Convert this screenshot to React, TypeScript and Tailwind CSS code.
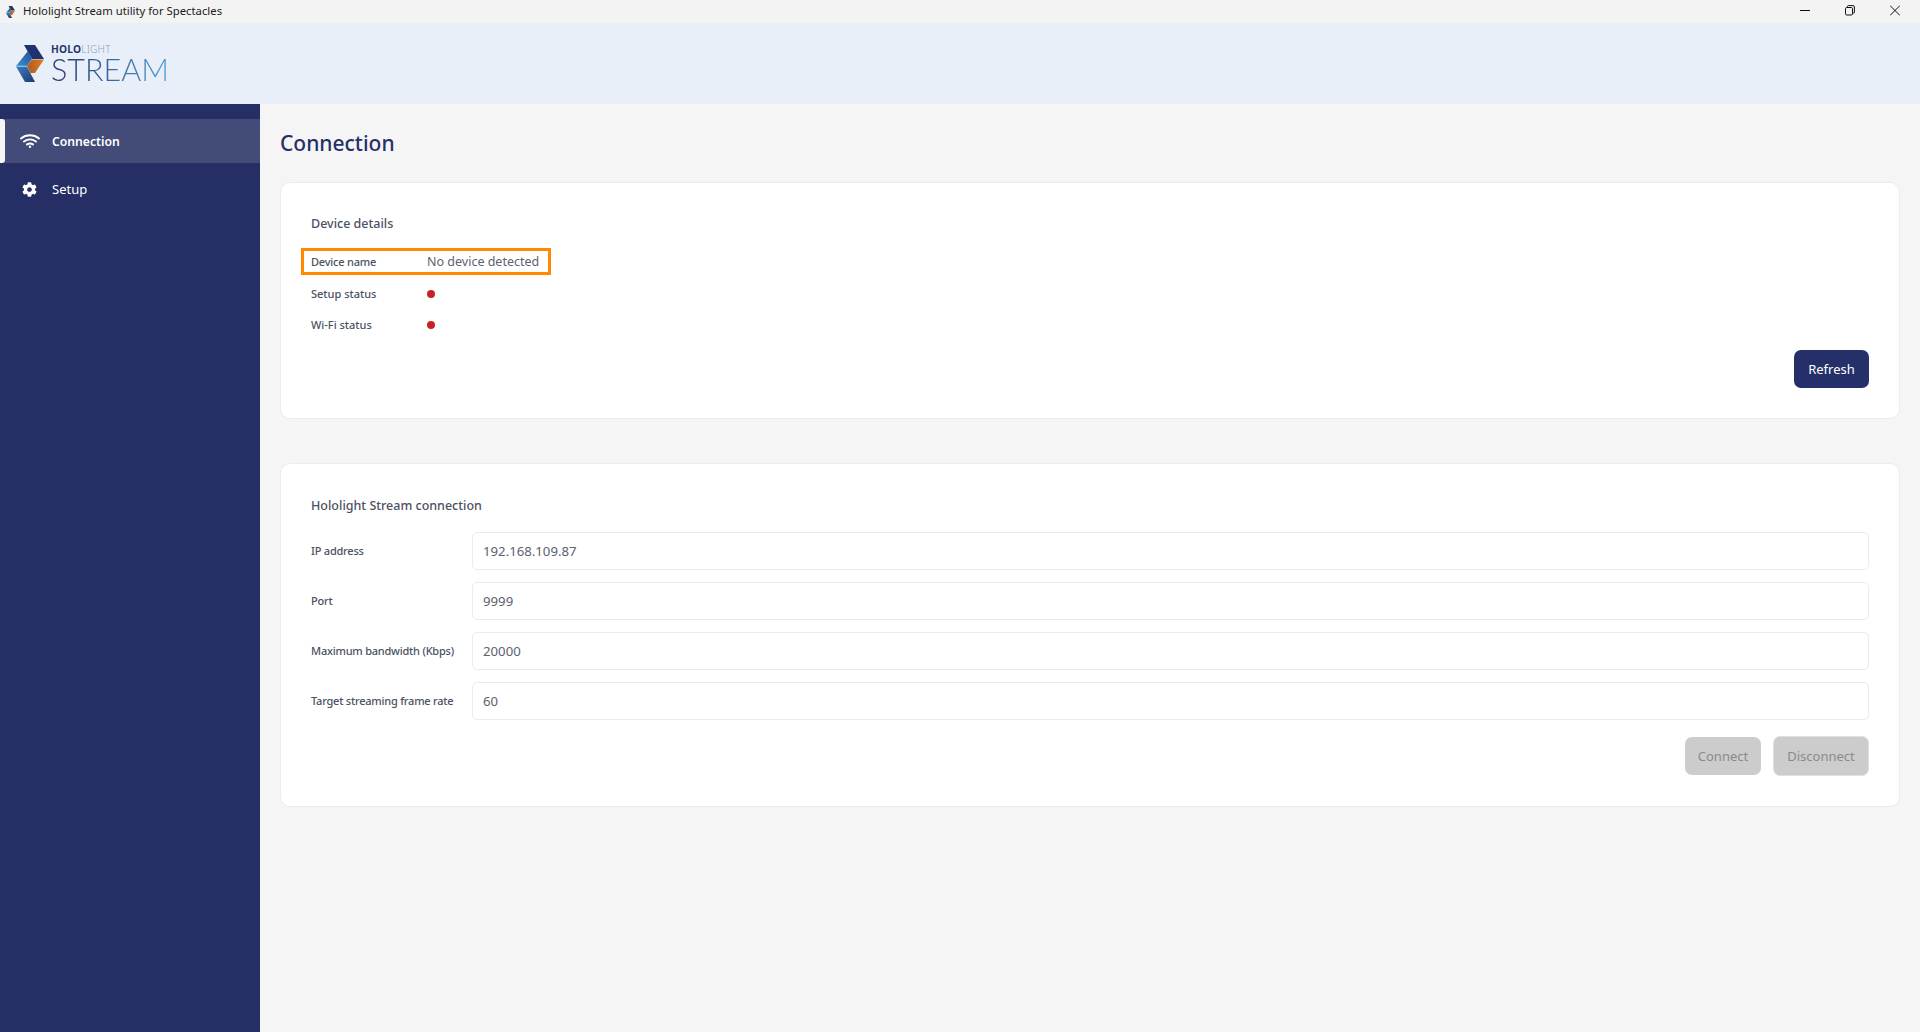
import React from "react";
import { FaCog } from "react-icons/fa";

const font = "font-['Noto_Sans','Liberation_Sans',sans-serif]";

function LogoMark({ size = 28, h = 37, id = "a" }: { size?: number; h?: number; id?: string }) {
  return (
    <svg width={size} height={h} viewBox="0 0 28 37" className="shrink-0">
      <defs>
        <linearGradient id={`${id}b`} x1="0" y1="1" x2="1" y2="0">
          <stop offset="0" stopColor="#3f8fd0" />
          <stop offset="1" stopColor="#1f4f93" />
        </linearGradient>
        <linearGradient id={`${id}o`} x1="0" y1="0" x2="1" y2="0">
          <stop offset="0" stopColor="#a9591f" />
          <stop offset="1" stopColor="#e57f22" />
        </linearGradient>
        <linearGradient id={`${id}d`} x1="0" y1="0" x2="1" y2="1">
          <stop offset="0" stopColor="#3d7fc0" />
          <stop offset="1" stopColor="#20386f" />
        </linearGradient>
      </defs>
      <polygon points="8,0 19,0 28,14 16,14" fill="#1f3170" />
      <polygon points="0,21 12,6 16,14 11,21" fill={`url(#${id}b)`} />
      <polygon points="28,14.5 19,28 14.5,28 11,21 16,14.5" fill={`url(#${id}o)`} />
      <polygon points="0,21.5 11,21.5 19,37 9,37" fill={`url(#${id}d)`} />
      <line x1="0.5" y1="21.2" x2="11" y2="21.2" stroke="#8cc4ee" strokeWidth="1" />
    </svg>
  );
}

function WifiIcon() {
  return (
    <svg width="20" height="14" viewBox="0 0 20 14" fill="none" stroke="#fff" strokeWidth="1.9" strokeLinecap="round" className="shrink-0">
      <path d="M1 4.5 C6 0.2 14 0.2 19 4.5" />
      <path d="M4 7.6 C8 4.6 12 4.6 16 7.6" />
      <path d="M7 10.4 C9 9.2 11 9.2 13 10.4" />
      <circle cx="10" cy="12.8" r="1.2" fill="#fff" stroke="none" />
    </svg>
  );
}

function Field({ label, value }: { label: string; value: string }) {
  return (
    <div className="flex items-center h-[38px]">
      <span className="w-[161px] shrink-0 pt-[1px] whitespace-nowrap text-[11px] tracking-[-0.22px] font-medium text-[#4b5263]">{label}</span>
      <input
        readOnly
        value={value}
        className={`flex-1 h-[38px] rounded-[5px] border border-[#e9ebee] bg-white px-[10px] text-[13.2px] text-[#5c6270] outline-none ${font}`}
      />
    </div>
  );
}

export default function App() {
  return (
    <div className={`flex flex-col h-screen overflow-hidden bg-[#f5f5f5] ${font}`}>
      {/* Title bar */}
      <div className="flex items-center h-[23px] bg-[#f3f3f3] pl-[6px] shrink-0">
        <LogoMark size={9} h={12} id="t" />
        <span className="ml-[8px] text-[11.3px] text-[#1a1a1a]">Hololight Stream utility for Spectacles</span>
        <div className="ml-auto flex items-center gap-[35px] pr-[20px] -mt-[3px]">
          <svg width="10" height="11" viewBox="0 0 10 11"><line x1="0" y1="5.5" x2="10" y2="5.5" stroke="#111" strokeWidth="1" /></svg>
          <svg width="10" height="11" viewBox="0 0 10 11" fill="none" stroke="#111" strokeWidth="1"><rect x="0.5" y="2.5" width="7" height="7.5" rx="1.2" /><path d="M2.5 2.5 V1.6 A1 1 0 0 1 3.5 0.6 H8 A1.4 1.4 0 0 1 9.4 2 V7.2 A1 1 0 0 1 8.4 8.2 H7.5" /></svg>
          <svg width="10" height="11" viewBox="0 0 10 11" stroke="#111" strokeWidth="1"><line x1="0" y1="0.5" x2="10" y2="10.5" /><line x1="10" y1="0.5" x2="0" y2="10.5" /></svg>
        </div>
      </div>

      {/* Header */}
      <div className="flex items-center h-[81px] bg-[#e9eff8] pl-[16px] shrink-0">
        <LogoMark />
        <div className="ml-[7px] flex flex-col">
          <span className="text-[10.2px] leading-[10px] tracking-[0.2px] text-[#24386f]">
            <span className="font-bold">HOLO</span>
            <span className="font-light text-[#8fa3c2]">LIGHT</span>
          </span>
          <span className="text-[30.5px] leading-[30px] font-light font-['Lato','Noto_Sans',sans-serif] bg-linear-to-r from-[#24386f] to-[#4a9bd4] bg-clip-text text-transparent w-fit">STREAM</span>
        </div>
      </div>

      {/* Body */}
      <div className="flex flex-1 min-h-0">
        <aside className="w-[260px] shrink-0 bg-[#252f66] pt-[15px] text-white">
          <div className="relative flex items-center h-[44px] bg-[#434c78] pl-[20px]">
            <span className="absolute left-0 top-0 h-[44px] w-[5px] rounded-r-[3px] bg-[#f5f5f5]" />
            <WifiIcon />
            <span className="ml-[12px] pt-[2px] text-[12.2px] font-semibold">Connection</span>
          </div>
          <div className="flex items-center h-[44px] mt-[4px] pl-[22px]">
            <FaCog className="w-[15px] h-[15px]" />
            <span className="ml-[15px] pt-[1px] text-[13px]">Setup</span>
          </div>
        </aside>

        <main className="flex-1 min-w-0 pl-[20px] pr-[20px] pt-[24px]">
          <h1 className="text-[21px] leading-[30px] font-medium text-[#25306a]">Connection</h1>

          <section className="mt-[24px] h-[237px] rounded-[10px] border border-[#ececec] bg-white pl-[30px] pr-[30px] pt-[30px]">
            <h2 className="pt-[1px] text-[12.5px] leading-[20px] font-medium text-[#4b5263]">Device details</h2>
            <div className="mt-[14px] -ml-[10px] flex items-center w-[250px] h-[27px] border-[3px] border-[#ff8a00] pl-[7px]">
              <span className="w-[116px] shrink-0 pt-[1px] text-[11px] tracking-[-0.2px] font-medium text-[#4b5263]">Device name</span>
              <span className="pt-[1px] text-[12.5px] whitespace-nowrap text-[#5c6270]">No device detected</span>
            </div>
            <div className="flex items-center h-[20px] mt-[9px]">
              <span className="w-[116px] text-[11px] font-medium text-[#4b5263]">Setup status</span>
              <span className="w-[8px] h-[8px] rounded-full bg-[#cc2027]" />
            </div>
            <div className="flex items-center h-[20px] mt-[11px]">
              <span className="w-[116px] text-[11px] font-medium text-[#4b5263]">Wi-Fi status</span>
              <span className="-mt-[1px] w-[8px] h-[8px] rounded-full bg-[#cc2027]" />
            </div>
            <div className="flex justify-end mt-[15px]">
              <button className="h-[38px] w-[75px] rounded-[7px] bg-[#25306a] pt-[1px] text-[13px] text-white">Refresh</button>
            </div>
          </section>

          <section className="mt-[44px] h-[344px] rounded-[10px] border border-[#ececec] bg-white pl-[30px] pr-[30px] pt-[31px]">
            <h2 className="pt-[1px] text-[12.5px] leading-[20px] font-medium text-[#4b5263]">Hololight Stream connection</h2>
            <div className="mt-[16px] flex flex-col gap-[12px]">
              <Field label="IP address" value="192.168.109.87" />
              <Field label="Port" value="9999" />
              <Field label="Maximum bandwidth (Kbps)" value="20000" />
              <Field label="Target streaming frame rate" value="60" />
            </div>
            <div className="flex justify-end items-center gap-[12px] mt-[16px]">
              <button className="h-[38px] w-[76px] rounded-[7px] bg-[#cccccc] pt-[1px] text-[13px] text-[#8a8a8e]">Connect</button>
              <button className="h-[40px] w-[96px] rounded-[7px] border border-[#e0e0e0] bg-[#cccccc] pt-[1px] text-[13px] text-[#8a8a8e]">Disconnect</button>
            </div>
          </section>
        </main>
      </div>
    </div>
  );
}
